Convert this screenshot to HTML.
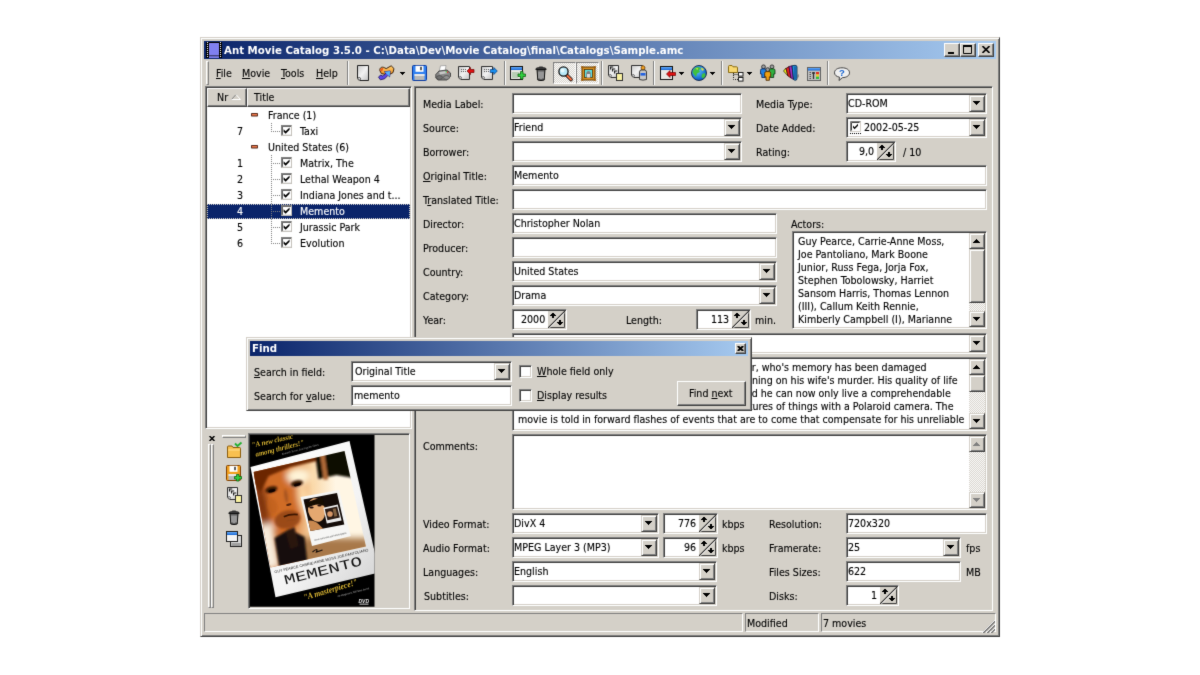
<!DOCTYPE html>
<html><head><meta charset="utf-8"><title>Ant Movie Catalog</title>
<style>
*{box-sizing:border-box;margin:0;padding:0}
html,body{width:1200px;height:675px;overflow:hidden;background:#fff}
body{position:relative;font-family:"DejaVu Sans Condensed","DejaVu Sans","Liberation Sans",sans-serif;font-stretch:condensed;font-size:10.6px;color:#000;line-height:13px}
#root{position:absolute;left:0;top:0;width:1200px;height:675px;background:#fff;filter:url(#soft)}
.a{position:absolute}
.t{position:absolute;white-space:pre;height:13px;line-height:13px;will-change:transform;-webkit-text-stroke:0.12px currentColor}
u{text-decoration:underline;text-underline-offset:1px}
#win{left:200px;top:37px;width:800px;height:599.6px;background:#d4d0c8;border:1px solid;border-color:#d4d0c8 #404040 #404040 #d4d0c8;box-shadow:inset 1px 1px 0 #fff,inset -1px -1px 0 #808080}
#tb{left:204px;top:41px;width:792px;height:18px;background:linear-gradient(90deg,#0a246a 0%,#a6caf0 100%)}
#tb .t{-webkit-text-stroke:0;color:#fff;font-weight:bold;font-size:11.35px;left:19.5px;top:2px;height:14px;line-height:14px}
.cb{position:absolute;top:2px;width:16px;height:14px;background:#d4d0c8;border:1px solid;border-color:#fff #404040 #404040 #fff;box-shadow:inset -1px -1px 0 #808080}
.sunk{position:absolute;background:#fff;border:1px solid;border-color:#808080 #fff #fff #808080;box-shadow:inset 1px 1px 0 #404040,inset -1px -1px 0 #d4d0c8}
.sunk .t{left:1px;top:3px}
.btn{position:absolute;background:#d4d0c8;border:1px solid;border-color:#d4d0c8 #404040 #404040 #d4d0c8;box-shadow:inset 1px 1px 0 #fff,inset -1px -1px 0 #808080}
.dd{position:absolute;right:1px;top:1px;width:16px;height:17px}
.dd:after,.sb i{content:"";position:absolute;left:3px;top:5px;width:7px;height:4px;background:linear-gradient(#000,#000) 0 0/7px 1px no-repeat,linear-gradient(#000,#000) 1px 1px/5px 1px no-repeat,linear-gradient(#000,#000) 2px 2px/3px 1px no-repeat,linear-gradient(#000,#000) 3px 3px/1px 1px no-repeat}
.arr{width:5px;height:3px;background:linear-gradient(#000,#000) 0 0/5px 1px no-repeat,linear-gradient(#000,#000) 1px 1px/3px 1px no-repeat,linear-gradient(#000,#000) 2px 2px/1px 1px no-repeat}
.sp{position:absolute;right:1px;top:1px;width:17px;height:17px}
.sep{position:absolute;top:61px;width:2px;height:24px;border-left:1px solid #808080;border-right:1px solid #fff}
.ic{position:absolute;overflow:visible}
.hd{background:#d4d0c8;border:1px solid;border-color:#fff #404040 #404040 #fff;box-shadow:inset -1px -1px 0 #808080}
.sb{background-color:#eae8e4;background-image:conic-gradient(#fff 25%,#d4d0c8 0 50%,#fff 0 75%,#d4d0c8 0);background-size:2px 2px}
.sb i.up{transform:scaleY(-1)}
.sb i.g{filter:invert(50%);box-shadow:none}
</style></head><body><svg width="0" height="0" style="position:absolute"><defs><filter id="soft" x="0" y="0" width="100%" height="100%" color-interpolation-filters="sRGB"><feConvolveMatrix order="3" kernelMatrix="0.01 0.08 0.01 0.08 0.64 0.08 0.01 0.08 0.01" edgeMode="duplicate" preserveAlpha="true"/></filter></defs></svg><div id="root">
<div id="win" class="a"></div>
<div id="tb" class="a"><div class="t">Ant Movie Catalog 3.5.0 - C:\Data\Dev\Movie Catalog\final\Catalogs\Sample.amc</div>
<div class="cb" style="left:740px"><svg class="a" style="left:3px;top:8px" width="6" height="2"><rect width="6" height="2" fill="#000"/></svg></div><div class="cb" style="left:756px"><svg class="a" style="left:2px;top:1px" width="9" height="9" viewBox="0 0 9 9"><path d="M0.5 1V8.5H8.5V1Z" fill="none" stroke="#000"/><path d="M0 1H9" stroke="#000" stroke-width="2"/></svg></div><div class="cb" style="left:774px"><svg class="a" style="left:3px;top:2px" width="8" height="7" viewBox="0 0 8 7"><path d="M0.5 0L7.5 7M7.5 0L0.5 7" stroke="#000" stroke-width="1.6"/></svg></div>
<svg class="a" style="left:2px;top:1px" width="16" height="16" viewBox="0 0 16 16"><rect width="16" height="16" fill="#000"/><rect x="3" y="1" width="10" height="12.5" fill="#8080f0"/><rect x="3" y="14.2" width="10" height="1.8" fill="#8080f0"/><path d="M1.5 0V16M14.5 0V16" stroke="#fff" stroke-width="1" stroke-dasharray="1 1"/></svg>
</div>
<div class="a" style="left:206px;top:61px;width:3px;height:24px;border:1px solid;border-color:#fff #808080 #808080 #fff"></div>
<div class="t" style="left:215.8px;top:66.5px;"><u>F</u>ile</div>
<div class="t" style="left:241.8px;top:66.5px;"><u>M</u>ovie</div>
<div class="t" style="left:281px;top:66.5px;"><u>T</u>ools</div>
<div class="t" style="left:315.5px;top:66.5px;"><u>H</u>elp</div>
<div class="sep" style="left:346.5px"></div>
<div class="sep" style="left:503.5px"></div>
<div class="sep" style="left:601px"></div>
<div class="sep" style="left:653px"></div>
<div class="sep" style="left:721px"></div>
<div class="sep" style="left:827px"></div>
<svg width="0" height="0" style="position:absolute"><defs>
<linearGradient id="gpage" x1="0" y1="0" x2="1" y2="1"><stop offset="0" stop-color="#c8c8c8"/><stop offset="0.5" stop-color="#f2f2f2"/><stop offset="1" stop-color="#c0c0c0"/></linearGradient>
<linearGradient id="gblue" x1="0" y1="0" x2="0" y2="1"><stop offset="0" stop-color="#6ab0ff"/><stop offset="1" stop-color="#1060d0"/></linearGradient>
<linearGradient id="gor" x1="0" y1="0" x2="0" y2="1"><stop offset="0" stop-color="#ffd070"/><stop offset="1" stop-color="#f09020"/></linearGradient>
<radialGradient id="gglobe" cx="0.4" cy="0.35" r="0.7"><stop offset="0" stop-color="#60c8ff"/><stop offset="1" stop-color="#0050c0"/></radialGradient>
<linearGradient id="ggray" x1="0" y1="0" x2="1" y2="0"><stop offset="0" stop-color="#b0b0b0"/><stop offset="0.5" stop-color="#707070"/><stop offset="1" stop-color="#404040"/></linearGradient>
<pattern id="chk" width="2" height="2" patternUnits="userSpaceOnUse"><rect width="2" height="2" fill="#fff"/><rect width="1" height="1" fill="#d4d0c8"/><rect x="1" y="1" width="1" height="1" fill="#d4d0c8"/></pattern>
</defs></svg>
<svg class="ic" style="left:356px;top:65px" width="16" height="16" viewBox="0 0 16 16"><path d="M1.5 0.5H12.5V15.5H4L1.5 13Z" fill="url(#gpage)" stroke="#202020"/><circle cx="3.2" cy="13.8" r="1.3" fill="#fff" stroke="#202020" stroke-width="0.8"/></svg>
<svg class="ic" style="left:378px;top:65px" width="16" height="16" viewBox="0 0 16 16"><path d="M1.8 5.5C1.5 2.8 3.8 1.4 6.2 2.6L8.2 3.6L13.2 0.8L16 3.6L15 7.6L11.2 9.6L9.6 7.6L6.6 9.2L3.4 8.6Z" fill="url(#gor)" stroke="#2a1200" stroke-width="0.9"/><path d="M2 5.5C2 3.5 3.8 2.6 5.5 3.2L4 6.5Z" fill="#f05818"/><path d="M0.5 12.2L2.6 10L5 11.2L8 8.2L6.4 6.8L12.2 6L11.6 11.8L10 10.3L6.6 13.8L2.4 14.8Z" fill="#5a48e8" stroke="#1a0c58" stroke-width="0.8"/><path d="M8 8.2L6.4 6.8L12.2 6L11.6 11.8L10 10.3Z" fill="#58b0f8"/></svg>
<div class="a arr" style="left:400px;top:72px"></div>
<svg class="ic" style="left:412px;top:65px" width="16" height="16" viewBox="0 0 16 16"><path d="M0.5 1.5Q0.5 0.5 1.5 0.5H13.5Q14.5 0.5 14.5 1.5V14.5Q14.5 15.5 13.5 15.5H1.5Q0.5 15.5 0.5 14.5Z" fill="#3080f0" stroke="#0838a0"/><rect x="3.5" y="0.8" width="8" height="6" fill="#fff"/><rect x="8" y="1.8" width="2" height="3.4" fill="#606060"/><rect x="2.5" y="9" width="10" height="6" fill="#b8b8b8"/><rect x="2.5" y="9" width="10" height="2" fill="#e8e8e8"/></svg>
<svg class="ic" style="left:435px;top:65px" width="16" height="16" viewBox="0 0 16 16"><path d="M4 7L5.5 0.8L11 0.5L10 7Z" fill="#fff" stroke="#909090" stroke-width="0.7"/><path d="M0.8 9.5L4 6L12 5L15.5 8V11.5L12 15H3L0.8 13Z" fill="#888" stroke="#303030" stroke-width="0.8"/><path d="M4 7L11 6L13 8L5 9.5Z" fill="#c8c8c8"/><ellipse cx="4.5" cy="12.5" rx="3" ry="2" fill="#707070" stroke="#404040" stroke-width="0.6"/><ellipse cx="11.5" cy="12.5" rx="3" ry="2" fill="#909090" stroke="#404040" stroke-width="0.6"/><rect x="12" y="6.6" width="1.2" height="1.2" fill="#e02020"/><rect x="10.6" y="6.2" width="1.2" height="1.2" fill="#20c020"/></svg>
<svg class="ic" style="left:458px;top:66px" width="16" height="16" viewBox="0 0 16 16"><path d="M0.5 0.5H11.5V13.5H3L0.5 11Z" fill="url(#gpage)" stroke="#303030"/><circle cx="2.2" cy="11.8" r="1.2" fill="#fff" stroke="#303030" stroke-width="0.8"/><path d="M3 3.5H8M3 5.5H8" stroke="#606060" stroke-width="1" stroke-dasharray="1 1"/><path d="M9 5L12.5 1.5V3.5H16V6.5H12.5V8.5Z" fill="#e01010" stroke="#700000" stroke-width="0.7"/></svg>
<svg class="ic" style="left:481px;top:66px" width="16" height="16" viewBox="0 0 16 16"><path d="M0.5 0.5H11.5V13.5H3L0.5 11Z" fill="url(#gpage)" stroke="#303030"/><circle cx="2.2" cy="11.8" r="1.2" fill="#fff" stroke="#303030" stroke-width="0.8"/><path d="M3 3.5H8M3 5.5H8" stroke="#606060" stroke-width="1" stroke-dasharray="1 1"/><path d="M16.3 5L12.8 1.5V3.5H9.3V6.5H12.8V8.5Z" fill="#1890f0" stroke="#003880" stroke-width="0.7"/></svg>
<svg class="ic" style="left:510px;top:66px" width="16" height="16" viewBox="0 0 16 16"><rect x="0.5" y="0.5" width="12" height="13" fill="#e8e8e4" stroke="#101010"/><rect x="1" y="1" width="11" height="3" fill="url(#gblue)"/><path d="M2 7H9M2 9H10M2 11H8" stroke="#60a060" stroke-width="1.2" opacity="0.7"/><path d="M10.5 5.5H13V8H15.5V10.5H13V13H10.5V10.5H8V8H10.5Z" fill="#30d040" stroke="#106010" stroke-width="0.8"/></svg>
<svg class="ic" style="left:535px;top:66px" width="12" height="15" viewBox="0 0 12 15"><path d="M2 3.5H10L9.2 14Q6 15.2 2.8 14Z" fill="#5c5c5c" stroke="#101010"/><path d="M4 5.5V12.5M6 5.5V13M8 5.5V12.5" stroke="#c8c8c8" stroke-width="1.1"/><path d="M0.8 3.5Q0.8 1.8 3 1.8H9Q11.2 1.8 11.2 3.5Z" fill="#484848" stroke="#101010" stroke-width="0.9"/><rect x="4" y="0.4" width="4" height="1.6" rx="0.6" fill="#303030"/></svg>
<div class="a" style="left:553px;top:62px;width:23px;height:22px;border:1px solid;border-color:#808080 #fff #fff #808080;background-image:conic-gradient(#fff 25%,#d4d0c8 0 50%,#fff 0 75%,#d4d0c8 0);background-size:2px 2px"></div>
<div class="a" style="left:576px;top:62px;width:23px;height:22px;border:1px solid;border-color:#808080 #fff #fff #808080;background-image:conic-gradient(#fff 25%,#d4d0c8 0 50%,#fff 0 75%,#d4d0c8 0);background-size:2px 2px"></div>
<svg class="ic" style="left:558px;top:66px" width="16" height="16" viewBox="0 0 16 16"><path d="M8 8.5L13 13.5" stroke="#101010" stroke-width="3.6" stroke-linecap="round"/><path d="M8.5 9L13 13.5" stroke="#ff7040" stroke-width="2" stroke-linecap="round"/><circle cx="5.5" cy="5.5" r="4.6" fill="#b8e8f8" stroke="#101010" stroke-width="1.3"/><circle cx="4.5" cy="4.5" r="2" fill="#e8faff"/></svg>
<svg class="ic" style="left:580.5px;top:66px" width="15" height="15" viewBox="0 0 15 15"><rect x="1" y="1" width="13" height="13" fill="#d89020" stroke="#603800" stroke-width="1"/><circle cx="1.3" cy="1.3" r="1.3" fill="#a06010"/><circle cx="13.7" cy="1.3" r="1.3" fill="#a06010"/><circle cx="1.3" cy="13.7" r="1.3" fill="#a06010"/><circle cx="13.7" cy="13.7" r="1.3" fill="#a06010"/><rect x="3.5" y="3.5" width="8" height="8" fill="#60e0e0" stroke="#503000" stroke-width="0.8"/><path d="M5.2 11.5V8Q5.2 5 7.5 5Q9.8 5 9.8 8V11.5Z" fill="#808080"/><rect x="6" y="8" width="3" height="3.5" fill="#e0e0e0"/></svg>
<svg class="ic" style="left:608px;top:65px" width="16" height="16" viewBox="0 0 16 16"><path d="M0.5 0.5H10.5V12.5H3L0.5 10Z" fill="url(#gpage)" stroke="#303030"/><circle cx="2.2" cy="10.8" r="1.2" fill="#fff" stroke="#303030" stroke-width="0.8"/><path d="M2.6 4.6V2H5.2M4.6 6.6V4H7.2M6.6 8.6V6H9.2" stroke="#202020" stroke-width="1.2" fill="none"/><rect x="8.5" y="8.5" width="6" height="7" fill="#f8f0a0" stroke="#303030"/></svg>
<svg class="ic" style="left:631px;top:65px" width="17" height="16" viewBox="0 0 17 16"><path d="M0.5 0.5H11.5V12.5H3L0.5 10Z" fill="url(#gpage)" stroke="#303030"/><circle cx="2.2" cy="10.8" r="1.2" fill="#fff" stroke="#303030" stroke-width="0.8"/><path d="M10 2L12 0.5L14 2L13.5 5H10.5Z" fill="#f0a020" stroke="#603000" stroke-width="0.7"/><path d="M8.5 7Q8.5 5 10.5 5H13.5Q15.5 5 15.5 7V14.5Q12 15.8 8.5 14.5Z" fill="#c8c8c8" stroke="#303030" stroke-width="0.9"/><rect x="9.5" y="8" width="5" height="2.6" fill="#2060e0"/></svg>
<svg class="ic" style="left:660px;top:66px" width="16" height="16" viewBox="0 0 16 16"><rect x="0.5" y="0.5" width="12" height="13" fill="#e8e8e4" stroke="#101010"/><rect x="1" y="1" width="11" height="3" fill="url(#gblue)"/><path d="M6.5 8L10 4.5V6.5H15.5V9.5H10V11.5Z" fill="#e01010" stroke="#700000" stroke-width="0.7"/></svg>
<div class="a arr" style="left:679px;top:72px"></div>
<svg class="ic" style="left:691px;top:65px" width="16" height="16" viewBox="0 0 16 16"><circle cx="8" cy="8" r="7.5" fill="url(#gglobe)" stroke="#102040" stroke-width="0.9"/><path d="M3 4Q5 1.5 8 2L10 3.5L8 5L9 7L6 8.5L5 12L3 9.5L1.5 7Z" fill="#40c040"/><path d="M10 2.5L13 4L12 6L10.5 5Z" fill="#e0e040"/><path d="M11 9L14 8L14.5 11L12 13.5L10.5 12Z" fill="#40c040"/><path d="M4.5 3.5L7 3L6.5 5Z" fill="#e0e040"/></svg>
<div class="a arr" style="left:710px;top:72px"></div>
<svg class="ic" style="left:728px;top:65px" width="16" height="17" viewBox="0 0 16 17"><path d="M0.5 1.5Q0.5 0.5 1.5 0.5H4L5 1.8H8.5Q9.5 1.8 9.5 2.8V7.5H0.5Z" fill="#f8d870" stroke="#806000" stroke-width="0.9"/><path d="M5.5 8V14.5H10M5.5 9.5H10" stroke="#202020" stroke-width="1" stroke-dasharray="1 1" fill="none"/><rect x="10.5" y="7.5" width="4.5" height="3.6" fill="#fff" stroke="#202020"/><rect x="10.5" y="12.5" width="4.5" height="3.6" fill="#fff" stroke="#202020"/></svg>
<div class="a arr" style="left:747px;top:72px"></div>
<svg class="ic" style="left:760px;top:65px" width="16" height="16" viewBox="0 0 16 16"><circle cx="3.5" cy="1.8" r="1.9" fill="#a0a0a0" stroke="#202020" stroke-width="0.8"/><path d="M0.5 5.5Q0.5 3.8 2 3.8H5Q6.5 3.8 6.5 5.5V9H5.2V12.5H1.8V9H0.5Z" fill="#2080e0" stroke="#082050" stroke-width="0.8"/><circle cx="12.0" cy="1.8" r="1.9" fill="#a0a0a0" stroke="#202020" stroke-width="0.8"/><path d="M9.0 5.5Q9.0 3.8 10.5 3.8H13.5Q15.0 3.8 15.0 5.5V9H13.7V12.5H10.3V9H9.0Z" fill="#30b040" stroke="#083010" stroke-width="0.8"/><circle cx="7.7" cy="4.6" r="1.9" fill="#a0a0a0" stroke="#202020" stroke-width="0.8"/><path d="M4.7 8.3Q4.7 6.6 6.2 6.6H9.2Q10.7 6.6 10.7 8.3V11.8H9.4V15.3H6.0V11.8H4.7Z" fill="#f0a010" stroke="#402000" stroke-width="0.8"/></svg>
<svg class="ic" style="left:783px;top:65px" width="16" height="16" viewBox="0 0 16 16"><path d="M14.5 13L16 12V9L14.5 10Z" fill="#909090"/><path d="M0.5 6L3 3L5 11Z" fill="#f0f020" stroke="#202000" stroke-width="0.7"/><path d="M3 3.5L6 1.5L8 13L5 11Z" fill="#e02020" stroke="#300000" stroke-width="0.7"/><path d="M6 1.5L9 0.8L10.5 14.5L8 13Z" fill="#a030c0" stroke="#200030" stroke-width="0.7"/><path d="M9 0.8L12 0.3Q14 0.3 14 2V13.5Q14 15.5 12 15.3L10.5 14.5Z" fill="#2090e0" stroke="#002040" stroke-width="0.8"/><path d="M12 1.5V14" stroke="#104080" stroke-width="1"/></svg>
<svg class="ic" style="left:806.5px;top:66.5px" width="14" height="14" viewBox="0 0 14 14"><rect x="0.5" y="0.5" width="13" height="13" fill="#c0c0c0" stroke="#606060"/><rect x="1" y="1" width="12" height="2.5" fill="url(#gblue)"/><path d="M2.5 5.5H4M2.5 7.5H4M2.5 9.5H4M2.5 11.5H4" stroke="#404040" stroke-width="0.9"/><path d="M5 6H8M6.5 5V12" stroke="#303030" stroke-width="1.3"/><rect x="9" y="5" width="3" height="2.4" fill="#e03020"/><rect x="9" y="7.4" width="3" height="2.3" fill="#f0d020"/><rect x="9" y="9.7" width="3" height="2.3" fill="#30c040"/></svg>
<svg class="ic" style="left:834px;top:67px" width="16" height="14" viewBox="0 0 16 14"><path d="M8 0.8C12.5 0.8 15.5 2.8 15.5 5.8C15.5 8.6 12.5 10.6 8.5 10.6L5 13.5L5.5 10.2C2.5 9.6 0.5 8 0.5 5.8C0.5 2.8 3.5 0.8 8 0.8Z" fill="#f0f0f0" stroke="#303030" stroke-width="0.9"/><text x="8" y="9" font-family="Liberation Sans,sans-serif" font-weight="bold" font-size="9.5" text-anchor="middle" fill="#1060d0">?</text></svg>
<div class="sunk" style="left:205px;top:86px;width:207px;height:343px"></div>
<div class="a hd" style="left:207px;top:88px;width:40px;height:19px"><div class="t" style="left:9.2px;top:1.5px">Nr</div><svg class="a" style="left:23.2px;top:4.5px" width="10" height="6" viewBox="0 0 10 6"><path d="M0.5 5.5L5 0.5" stroke="#808080" fill="none"/><path d="M5 0.5L9.5 5.5H0.5" stroke="#fff" fill="none"/></svg></div>
<div class="a hd" style="left:247px;top:88px;width:163px;height:19px"><div class="t" style="left:6px;top:1.5px">Title</div></div>
<svg class="a" style="left:251px;top:113.2px" width="7" height="3.4" viewBox="0 0 7 3.4"><rect x="0" y="0" width="7" height="3.4" rx="0.7" fill="#50281c"/><rect x="0.9" y="0.9" width="5.2" height="1.6" fill="#f07848"/></svg>
<div class="t" style="left:267.5px;top:108.5px;">France (1)</div>
<div class="t" style="left:237px;top:124.5px;color:#000">7</div>
<svg class="a" style="left:281px;top:125.3px" width="11.2" height="10.8" viewBox="0 0 12 12" preserveAspectRatio="none"><rect x="0.5" y="0.5" width="11" height="11" fill="#fff" stroke="#808080"/><path d="M1.5 11V1.5H11" stroke="#404040" fill="none"/><path d="M11.5 0.5V11.5H0.5" stroke="#d4d0c8" fill="none"/><path d="M2.8 4.8L5 7L9.2 2.8V5.4L5 9.6L2.8 7.4Z" fill="#000"/></svg>
<div class="t" style="left:300px;top:124.5px;color:#000">Taxi</div>
<svg class="a" style="left:251px;top:145.2px" width="7" height="3.4" viewBox="0 0 7 3.4"><rect x="0" y="0" width="7" height="3.4" rx="0.7" fill="#50281c"/><rect x="0.9" y="0.9" width="5.2" height="1.6" fill="#f07848"/></svg>
<div class="t" style="left:267.5px;top:140.5px;">United States (6)</div>
<div class="t" style="left:237px;top:156.5px;color:#000">1</div>
<svg class="a" style="left:281px;top:157.3px" width="11.2" height="10.8" viewBox="0 0 12 12" preserveAspectRatio="none"><rect x="0.5" y="0.5" width="11" height="11" fill="#fff" stroke="#808080"/><path d="M1.5 11V1.5H11" stroke="#404040" fill="none"/><path d="M11.5 0.5V11.5H0.5" stroke="#d4d0c8" fill="none"/><path d="M2.8 4.8L5 7L9.2 2.8V5.4L5 9.6L2.8 7.4Z" fill="#000"/></svg>
<div class="t" style="left:300px;top:156.5px;color:#000">Matrix, The</div>
<div class="t" style="left:237px;top:172.5px;color:#000">2</div>
<svg class="a" style="left:281px;top:173.3px" width="11.2" height="10.8" viewBox="0 0 12 12" preserveAspectRatio="none"><rect x="0.5" y="0.5" width="11" height="11" fill="#fff" stroke="#808080"/><path d="M1.5 11V1.5H11" stroke="#404040" fill="none"/><path d="M11.5 0.5V11.5H0.5" stroke="#d4d0c8" fill="none"/><path d="M2.8 4.8L5 7L9.2 2.8V5.4L5 9.6L2.8 7.4Z" fill="#000"/></svg>
<div class="t" style="left:300px;top:172.5px;color:#000">Lethal Weapon 4</div>
<div class="t" style="left:237px;top:188.5px;color:#000">3</div>
<svg class="a" style="left:281px;top:189.3px" width="11.2" height="10.8" viewBox="0 0 12 12" preserveAspectRatio="none"><rect x="0.5" y="0.5" width="11" height="11" fill="#fff" stroke="#808080"/><path d="M1.5 11V1.5H11" stroke="#404040" fill="none"/><path d="M11.5 0.5V11.5H0.5" stroke="#d4d0c8" fill="none"/><path d="M2.8 4.8L5 7L9.2 2.8V5.4L5 9.6L2.8 7.4Z" fill="#000"/></svg>
<div class="t" style="left:300px;top:188.5px;color:#000">Indiana Jones and t...</div>
<div class="a" style="left:207px;top:204px;width:203px;height:15px;background:#0a246a;outline:1px dotted #d4d0c8;outline-offset:-1px"></div>
<div class="t" style="left:237px;top:204.5px;color:#fff">4</div>
<svg class="a" style="left:281px;top:205.3px" width="11.2" height="10.8" viewBox="0 0 12 12" preserveAspectRatio="none"><rect x="0.5" y="0.5" width="11" height="11" fill="#fff" stroke="#808080"/><path d="M1.5 11V1.5H11" stroke="#404040" fill="none"/><path d="M11.5 0.5V11.5H0.5" stroke="#d4d0c8" fill="none"/><path d="M2.8 4.8L5 7L9.2 2.8V5.4L5 9.6L2.8 7.4Z" fill="#000"/></svg>
<div class="t" style="left:300px;top:204.5px;color:#fff">Memento</div>
<div class="t" style="left:237px;top:220.5px;color:#000">5</div>
<svg class="a" style="left:281px;top:221.3px" width="11.2" height="10.8" viewBox="0 0 12 12" preserveAspectRatio="none"><rect x="0.5" y="0.5" width="11" height="11" fill="#fff" stroke="#808080"/><path d="M1.5 11V1.5H11" stroke="#404040" fill="none"/><path d="M11.5 0.5V11.5H0.5" stroke="#d4d0c8" fill="none"/><path d="M2.8 4.8L5 7L9.2 2.8V5.4L5 9.6L2.8 7.4Z" fill="#000"/></svg>
<div class="t" style="left:300px;top:220.5px;color:#000">Jurassic Park</div>
<div class="t" style="left:237px;top:236.5px;color:#000">6</div>
<svg class="a" style="left:281px;top:237.3px" width="11.2" height="10.8" viewBox="0 0 12 12" preserveAspectRatio="none"><rect x="0.5" y="0.5" width="11" height="11" fill="#fff" stroke="#808080"/><path d="M1.5 11V1.5H11" stroke="#404040" fill="none"/><path d="M11.5 0.5V11.5H0.5" stroke="#d4d0c8" fill="none"/><path d="M2.8 4.8L5 7L9.2 2.8V5.4L5 9.6L2.8 7.4Z" fill="#000"/></svg>
<div class="t" style="left:300px;top:236.5px;color:#000">Evolution</div>
<div class="a" style="left:271px;top:123px;width:1px;height:9px;background-image:linear-gradient(#808080 50%,transparent 0);background-size:1px 2px"></div>
<div class="a" style="left:271px;top:131px;width:9px;height:1px;background-image:linear-gradient(90deg,#808080 50%,transparent 0);background-size:2px 1px"></div>
<div class="a" style="left:271px;top:155px;width:1px;height:89px;background-image:linear-gradient(#808080 50%,transparent 0);background-size:1px 2px"></div>
<div class="a" style="left:271px;top:163px;width:9px;height:1px;background-image:linear-gradient(90deg,#808080 50%,transparent 0);background-size:2px 1px"></div>
<div class="a" style="left:271px;top:179px;width:9px;height:1px;background-image:linear-gradient(90deg,#808080 50%,transparent 0);background-size:2px 1px"></div>
<div class="a" style="left:271px;top:195px;width:9px;height:1px;background-image:linear-gradient(90deg,#808080 50%,transparent 0);background-size:2px 1px"></div>
<div class="a" style="left:271px;top:211px;width:9px;height:1px;background-image:linear-gradient(90deg,#808080 50%,transparent 0);background-size:2px 1px"></div>
<div class="a" style="left:271px;top:227px;width:9px;height:1px;background-image:linear-gradient(90deg,#808080 50%,transparent 0);background-size:2px 1px"></div>
<div class="a" style="left:271px;top:243px;width:9px;height:1px;background-image:linear-gradient(90deg,#808080 50%,transparent 0);background-size:2px 1px"></div>
<svg class="a" style="left:209px;top:436px" width="6" height="5" viewBox="0 0 6 5"><path d="M0.5 0L5.5 5M5.5 0L0.5 5" stroke="#000" stroke-width="1.5"/></svg>
<div class="a" style="left:208px;top:444px;width:3px;height:164px;border:1px solid;border-color:#fff #808080 #808080 #fff"></div>
<div class="a" style="left:211px;top:444px;width:3px;height:164px;border:1px solid;border-color:#fff #808080 #808080 #fff"></div>
<div class="a" style="left:222px;top:435px;width:24px;height:3px;border:1px solid;border-color:#fff #808080 #808080 #fff"></div>
<svg class="ic" style="left:227px;top:442px" width="16" height="16" viewBox="0 0 16 16"><path d="M0.5 5Q0.5 4 1.5 4H5L6 5.5H12.5Q13.5 5.5 13.5 6.5V15.5H0.5Z" fill="#f8c050" stroke="#805000" stroke-width="0.9"/><path d="M1 8H13" stroke="#ffe090" stroke-width="1"/><path d="M8 1.5L10.5 4L14.5 0.5" stroke="#20b030" stroke-width="1.8" fill="none"/></svg>
<svg class="ic" style="left:226px;top:465px" width="16" height="16" viewBox="0 0 16 16"><path d="M0.5 1.5Q0.5 0.5 1.5 0.5H13.5Q14.5 0.5 14.5 1.5V14.5Q14.5 15.5 13.5 15.5H1.5Q0.5 15.5 0.5 14.5Z" fill="#f0a020" stroke="#804000"/><rect x="3.5" y="0.8" width="8" height="6" fill="#fff"/><rect x="8" y="1.8" width="2" height="3.4" fill="#606060"/><rect x="2.5" y="9" width="10" height="6" fill="#b8b8b8"/><rect x="2.5" y="9" width="10" height="2" fill="#e8e8e8"/><path d="M10.5 9.5H13V11.5H15.5V14H13V16H10.5V14H8.5V11.5H10.5Z" fill="#30d040" stroke="#106010" stroke-width="0.8"/></svg>
<svg class="ic" style="left:227px;top:487px" width="16" height="16" viewBox="0 0 16 16"><path d="M0.5 0.5H10.5V12.5H3L0.5 10Z" fill="url(#gpage)" stroke="#303030"/><circle cx="2.2" cy="10.8" r="1.2" fill="#fff" stroke="#303030" stroke-width="0.8"/><path d="M2.6 4.6V2H5.2M4.6 6.6V4H7.2M6.6 8.6V6H9.2" stroke="#202020" stroke-width="1.2" fill="none"/><rect x="8.5" y="8.5" width="6" height="7" fill="#f8f0a0" stroke="#303030"/></svg>
<svg class="ic" style="left:228px;top:510px" width="12" height="15" viewBox="0 0 12 15"><path d="M2 3.5H10L9.2 14Q6 15.2 2.8 14Z" fill="#5c5c5c" stroke="#101010"/><path d="M4 5.5V12.5M6 5.5V13M8 5.5V12.5" stroke="#c8c8c8" stroke-width="1.1"/><path d="M0.8 3.5Q0.8 1.8 3 1.8H9Q11.2 1.8 11.2 3.5Z" fill="#484848" stroke="#101010" stroke-width="0.9"/><rect x="4" y="0.4" width="4" height="1.6" rx="0.6" fill="#303030"/></svg>
<svg class="ic" style="left:226px;top:531px" width="16" height="16" viewBox="0 0 16 16"><rect x="4.5" y="4.5" width="11" height="11" fill="#d8d8d8" stroke="#202020"/><rect x="5.5" y="12" width="9" height="3" fill="#a0a0a0"/><rect x="0.5" y="0.5" width="11" height="10" fill="#f4f4f4" stroke="#202020"/><rect x="1" y="1" width="10" height="3" fill="url(#gblue)"/></svg>
<div class="a" style="left:248px;top:433px;width:162px;height:176px;border:1px solid;border-color:#808080 #fff #fff #808080;box-shadow:inset 1px 1px 0 #404040"></div>
<svg class="a" style="left:249.5px;top:435px;will-change:transform" width="124.5" height="171.8" viewBox="249.5 435 124.5 171.8">
<defs>
<filter id="b1" x="-30%" y="-30%" width="160%" height="160%"><feGaussianBlur stdDeviation="1.3"/></filter>
<filter id="b2" x="-30%" y="-30%" width="160%" height="160%"><feGaussianBlur stdDeviation="3.2"/></filter>
<filter id="b0" x="-30%" y="-30%" width="160%" height="160%"><feGaussianBlur stdDeviation="0.55"/></filter>
<linearGradient id="pg4" x1="0" y1="0" x2="1" y2="1"><stop offset="0" stop-color="#ffffff"/><stop offset="0.6" stop-color="#f4f4f4"/><stop offset="1" stop-color="#d0d0d0"/></linearGradient>
<linearGradient id="pgb" gradientUnits="userSpaceOnUse" x1="253" y1="0" x2="335" y2="0"><stop offset="0" stop-color="#9c400c"/><stop offset="0.4" stop-color="#d4702c"/><stop offset="0.72" stop-color="#fad8a8"/><stop offset="1" stop-color="#fff6e4"/></linearGradient>
<clipPath id="pc"><rect x="249.5" y="435" width="124.5" height="171.8"/></clipPath>
<clipPath id="pph"><polygon points="253,472 344,451 365.5,546.5 270,567.5"/></clipPath>
<clipPath id="pp2"><polygon points="303,499.5 336.5,493 343.8,524.5 310,531"/></clipPath>
</defs>
<g clip-path="url(#pc)">
<rect x="249" y="434" width="126" height="174" fill="#000"/>
<g fill="#d4b030" font-family="Liberation Serif,serif" font-style="italic" font-weight="bold" font-size="7.4">
<text transform="translate(251.8 447.6) rotate(-12.5)" textLength="42" lengthAdjust="spacingAndGlyphs">"A new classic</text>
<text transform="translate(255.6 456.8) rotate(-14)" textLength="50" lengthAdjust="spacingAndGlyphs">among thrillers!"</text>
<text transform="translate(281.5 455) rotate(-14.5)" font-size="2.8" fill="#b0b0b0" font-weight="normal" textLength="38">Kenneth Turan, Los Angeles Times</text>
</g>
<polygon points="250,467 349,441 376,560 376,573.2 275,597.3" fill="url(#pg4)"/>
<g clip-path="url(#pph)">
<rect x="250" y="448" width="120" height="122" fill="url(#pgb)"/>
<g filter="url(#b2)">
<ellipse cx="281" cy="500" rx="21" ry="31" fill="#d06c28" transform="rotate(-12 282 499)"/>
<ellipse cx="298" cy="476" rx="12" ry="8" fill="#fff4d8"/>
<ellipse cx="303" cy="500" rx="5" ry="17" fill="#ffdca8" transform="rotate(-12 303 500)"/>
<rect x="255" y="524" width="21" height="46" fill="#f8ecdc" transform="rotate(-10 265 546)"/>
<rect x="298" y="538" width="72" height="30" fill="#a87848"/>
<ellipse cx="261.5" cy="502" rx="5.5" ry="24" fill="#7c300a" transform="rotate(-12 261.5 502)"/>
</g>
<g filter="url(#b1)">
<polygon points="249,466 315,450 316,461 290,467 268,476 260,492 251,482" fill="#6c2806"/>
<polygon points="314,450 347,444 353,478 336,475 318,479" fill="#100806"/>
<rect x="321.5" y="455" width="4.5" height="25" fill="#b06a38" transform="rotate(-8 323 468)"/>
<ellipse cx="287" cy="519.5" rx="13" ry="9" fill="#843a10" opacity="0.7" transform="rotate(-12 287 519.5)"/>
<polygon points="274,538 289,529 304,537 307,563 279,569" fill="#180e08"/>
<polygon points="285,531 294,527 298,546 290,549" fill="#2c160a"/>
<ellipse cx="270.8" cy="489.6" rx="6.2" ry="3.1" fill="#341204" transform="rotate(-16 270.8 489.6)"/>
<ellipse cx="296.4" cy="483.4" rx="6.2" ry="3" fill="#341204" transform="rotate(-12 296.4 483.4)"/>
<ellipse cx="285.6" cy="496" rx="1.8" ry="7" fill="#a85420" transform="rotate(-8 285.6 496)"/>
<ellipse cx="272" cy="506" rx="5" ry="8" fill="#c0601f" opacity="0.7" transform="rotate(-12 272 506)"/>
</g>
<g filter="url(#b0)">
<ellipse cx="271.4" cy="490.8" rx="3.6" ry="1.5" fill="#0c0402" transform="rotate(-14 271.4 490.8)"/>
<ellipse cx="296.8" cy="484.6" rx="3.6" ry="1.5" fill="#0c0402" transform="rotate(-14 296.8 484.6)"/>
<ellipse cx="288.3" cy="504.6" rx="2.8" ry="1.2" fill="#5a260c" transform="rotate(-14 288.3 504.6)"/>
<path d="M283.3 516.8Q289.5 513.8 297.2 514.6" stroke="#3c1606" stroke-width="1.8" fill="none"/>
<path d="M286 521.2Q291 519.8 295 520" stroke="#944818" stroke-width="1.3" fill="none"/>
<path d="M312 552Q318 547 316 552L322 550" stroke="#181008" stroke-width="1.2" fill="none"/>
</g>
</g>
<polygon points="300,497 338.5,490 350.3,536 311.5,546" fill="#f6f6f4"/>
<polygon points="303,499.5 336.5,493 343.8,524.5 310,531" fill="#140c08"/>
<g clip-path="url(#pp2)">
<g filter="url(#b0)">
<ellipse cx="316" cy="510" rx="8.5" ry="12" fill="#e4a870" transform="rotate(-14 316 510)"/>
<path d="M304 503L322 497L324 506Q316 502 307 508Z" fill="#140a06"/>
<ellipse cx="311" cy="507.5" rx="2.2" ry="1" fill="#201008"/><ellipse cx="319" cy="505.5" rx="2.2" ry="1" fill="#201008"/>
<path d="M303 522Q312 518 318 524L324 530L308 533Z" fill="#c88850"/>
</g>
</g>
<polygon points="322.8,507.7 337.3,504.5 341.1,520.4 326.3,523.6" fill="#ececec"/>
<polygon points="324.3,509.3 336.6,506.6 339.3,517.4 327,520.2" fill="#2c1c14"/>
<circle cx="329.5" cy="514" r="2.8" fill="#d89868"/><rect x="333" y="508.5" width="3" height="8" fill="#806040" transform="rotate(-12 334.5 512.5)"/>
<g font-family="Liberation Sans,sans-serif" fill="#202020">
<text transform="translate(274.3 573.2) rotate(-13.3)" font-size="3.7" textLength="96.5" lengthAdjust="spacingAndGlyphs">GUY PEARCE   CARRIE-ANNE MOSS   JOE PANTOLIANO</text>
<text transform="translate(284.8 584.6) rotate(-14.2) scale(1 1.05)" font-size="13" textLength="80" lengthAdjust="spacingAndGlyphs" font-family="Liberation Mono,monospace" fill="#101010">MEMENTO</text>
<text transform="translate(314 541) rotate(-13)" font-size="2.4" fill="#505050" textLength="33">some memories are best forgotten</text>
</g>
<g fill="#d4b030" font-family="Liberation Serif,serif" font-style="italic" font-weight="bold">
<text transform="translate(304 600.3) rotate(-16.5)" font-size="8.6" textLength="56" lengthAdjust="spacingAndGlyphs">"A masterpiece!"</text>
<text transform="translate(337 597) rotate(-14)" font-size="2.6" fill="#b0b0b0" font-weight="normal" textLength="33">Joe Morgenstern, Wall Street Journal</text>
</g>
<text x="358" y="602.8" font-size="4.6" font-weight="bold" font-style="italic" fill="#e8e8e8" font-family="Liberation Sans,sans-serif" textLength="10.5" lengthAdjust="spacingAndGlyphs">DVD</text>
<rect x="359" y="603.6" width="9" height="1.1" fill="#c0c0c0"/>
</g>
</svg>

<div class="a" style="left:414px;top:86px;width:579px;height:525px;border:1px solid;border-color:#808080 #fff #fff #808080;box-shadow:inset 1px 1px 0 #404040"></div>
<div class="t" style="left:423.2px;top:97.5px;">Media Label:</div>
<div class="sunk" style="left:512px;top:93px;width:230px;height:21px"><div class="t"></div></div>
<div class="t" style="left:423.2px;top:121.5px;">Source:</div>
<div class="sunk" style="left:512px;top:117px;width:230px;height:21px"><div class="t">Friend</div><div class="btn dd"></div></div>
<div class="t" style="left:423.2px;top:145.5px;">Borrower:</div>
<div class="sunk" style="left:512px;top:141px;width:230px;height:21px"><div class="t"></div><div class="btn dd"></div></div>
<div class="t" style="left:423.2px;top:169.5px;"><u>O</u>riginal Title:</div>
<div class="sunk" style="left:512px;top:165px;width:475px;height:21px"><div class="t">Memento</div></div>
<div class="t" style="left:423.2px;top:193.5px;">T<u>r</u>anslated Title:</div>
<div class="sunk" style="left:512px;top:189px;width:475px;height:21px"><div class="t"></div></div>
<div class="t" style="left:423.2px;top:217.5px;">Director:</div>
<div class="sunk" style="left:512px;top:213px;width:265px;height:21px"><div class="t">Christopher Nolan</div></div>
<div class="t" style="left:423.2px;top:241.5px;">Producer:</div>
<div class="sunk" style="left:512px;top:237px;width:265px;height:21px"><div class="t"></div></div>
<div class="t" style="left:423.2px;top:265.5px;">Country:</div>
<div class="sunk" style="left:512px;top:261px;width:265px;height:21px"><div class="t">United States</div><div class="btn dd"></div></div>
<div class="t" style="left:423.2px;top:289.5px;">Category:</div>
<div class="sunk" style="left:512px;top:285px;width:265px;height:21px"><div class="t">Drama</div><div class="btn dd"></div></div>
<div class="t" style="left:423.2px;top:313.5px;">Year:</div>
<div class="sunk" style="left:512px;top:309px;width:55px;height:21px"><div class="t" style="left:auto;right:20.5px">2000</div><svg class="sp" viewBox="0 0 17 17"><rect width="17" height="17" fill="#d4d0c8"/><path d="M16.5 0V16.5H0" stroke="#404040" fill="none"/><path d="M0.3 16.7L16.7 0.3" stroke="#202020" stroke-width="1.1"/><path d="M1.3 17L17 1.3" stroke="#fff" stroke-width="0.9"/><path shape-rendering="crispEdges" d="M4 2h2v1h1v1h1v1h-2v2h-2v-2h-2v-1h1v-1h1z" fill="#000"/><path shape-rendering="crispEdges" d="M11 9h2v2h2v1h-1v1h-1v1h-2v-1h-1v-1h-1v-1h2z" fill="#000"/></svg></div>
<div class="t" style="left:626px;top:313.5px;">Length:</div>
<div class="sunk" style="left:696px;top:309px;width:55px;height:21px"><div class="t" style="left:auto;right:20.5px">113</div><svg class="sp" viewBox="0 0 17 17"><rect width="17" height="17" fill="#d4d0c8"/><path d="M16.5 0V16.5H0" stroke="#404040" fill="none"/><path d="M0.3 16.7L16.7 0.3" stroke="#202020" stroke-width="1.1"/><path d="M1.3 17L17 1.3" stroke="#fff" stroke-width="0.9"/><path shape-rendering="crispEdges" d="M4 2h2v1h1v1h1v1h-2v2h-2v-2h-2v-1h1v-1h1z" fill="#000"/><path shape-rendering="crispEdges" d="M11 9h2v2h2v1h-1v1h-1v1h-2v-1h-1v-1h-1v-1h2z" fill="#000"/></svg></div>
<div class="t" style="left:754.5px;top:313.5px;">min.</div>
<div class="t" style="left:755.7px;top:97.5px;">Media Type:</div>
<div class="sunk" style="left:846px;top:93px;width:141px;height:21px"><div class="t">CD-ROM</div><div class="btn dd"></div></div>
<div class="t" style="left:755.7px;top:121.5px;">Date Added:</div>
<div class="sunk" style="left:846px;top:117px;width:141px;height:21px"><div class="t" style="left:17px">2002-05-25</div><svg class="a" style="left:3px;top:3px" width="13" height="14" viewBox="0 0 13 14"><rect x="0" y="0" width="11" height="11" fill="#fff"/><path d="M10.5 0.5V10.5H0.5" stroke="#d4d0c8" fill="none"/><path d="M0.5 10.5V0.5H10.5" stroke="#808080" fill="none"/><path d="M1.5 9.5V1.5H9.5" stroke="#404040" fill="none"/><path d="M3 4.6L4.6 6.2L8 2.8V4.8L4.6 8.2L3 6.6Z" fill="#000"/><path d="M0 12.5H12" stroke="#000" stroke-dasharray="1 1"/></svg><div class="btn dd"></div></div>
<div class="t" style="left:755.7px;top:145.5px;">Rating:</div>
<div class="sunk" style="left:846px;top:141px;width:50px;height:21px"><div class="t" style="left:auto;right:20.5px">9,0</div><svg class="sp" viewBox="0 0 17 17"><rect width="17" height="17" fill="#d4d0c8"/><path d="M16.5 0V16.5H0" stroke="#404040" fill="none"/><path d="M0.3 16.7L16.7 0.3" stroke="#202020" stroke-width="1.1"/><path d="M1.3 17L17 1.3" stroke="#fff" stroke-width="0.9"/><path shape-rendering="crispEdges" d="M4 2h2v1h1v1h1v1h-2v2h-2v-2h-2v-1h1v-1h1z" fill="#000"/><path shape-rendering="crispEdges" d="M11 9h2v2h2v1h-1v1h-1v1h-2v-1h-1v-1h-1v-1h2z" fill="#000"/></svg></div>
<div class="t" style="left:903px;top:145.5px;">/ 10</div>
<div class="t" style="left:791.2px;top:217.5px;">Actors:</div>
<div class="sunk" style="left:792px;top:231px;width:195px;height:98px"><div class="t" style="left:5px;top:3px">Guy Pearce, Carrie-Anne Moss,</div><div class="t" style="left:5px;top:16px">Joe Pantoliano, Mark Boone</div><div class="t" style="left:5px;top:29px">Junior, Russ Fega, Jorja Fox,</div><div class="t" style="left:5px;top:42px">Stephen Tobolowsky, Harriet</div><div class="t" style="left:5px;top:55px">Sansom Harris, Thomas Lennon</div><div class="t" style="left:5px;top:68px">(III), Callum Keith Rennie,</div><div class="t" style="left:5px;top:81px">Kimberly Campbell (I), Marianne</div><div class="a sb" style="right:1px;top:1px;width:16px;height:94px"><div class="btn" style="left:0;top:0;width:16px;height:16px"><i class="up"></i></div><div class="btn" style="left:0;bottom:0;width:16px;height:16px"><i class="dn"></i></div><div class="btn" style="left:0;top:16px;width:16px;height:54px"></div></div></div>
<div class="sunk" style="left:512px;top:333px;width:475px;height:21px"><div class="t"></div><div class="btn dd"></div></div>
<div class="sunk" style="left:512px;top:357px;width:475px;height:74px"><div class="a" style="left:239px;top:0;width:216px;height:56px;overflow:hidden"><div class="t" style="left:auto;right:41px;top:2.5px">about Leonard (Guy Pearce), an ex-insurance investigator, who's memory has been damaged</div><div class="t" style="left:auto;right:10px;top:15.5px">following a head injury he sustained after intervening on his wife's murder. His quality of life</div><div class="t" style="left:auto;right:17.399999999999977px;top:28.5px">has been severely hampered after this event, and he can now only live a comprehendable</div><div class="t" style="left:auto;right:14px;top:41.5px">life by tattooing notes on himself and taking pictures of things with a Polaroid camera. The</div></div><div class="t" style="left:5px;top:54.5px">movie is told in forward flashes of events that are to come that compensate for his unreliable</div><div class="a sb" style="right:1px;top:1px;width:16px;height:70px"><div class="btn" style="left:0;top:0;width:16px;height:16px"><i class="up"></i></div><div class="btn" style="left:0;bottom:0;width:16px;height:16px"><i class="dn"></i></div><div class="btn" style="left:0;top:16px;width:16px;height:17px"></div></div></div>
<div class="t" style="left:423.2px;top:439.5px;">Comments:</div>
<div class="sunk" style="left:512px;top:434px;width:475px;height:76px"><div class="a sb" style="right:1px;top:1px;width:16px;height:72px"><div class="btn" style="left:0;top:0;width:16px;height:16px"><i class="up g"></i></div><div class="btn" style="left:0;bottom:0;width:16px;height:16px"><i class="dn g"></i></div></div></div>
<div class="t" style="left:423.2px;top:517.5px;">Video Format:</div>
<div class="sunk" style="left:512px;top:513px;width:147px;height:21px"><div class="t">DivX 4</div><div class="btn dd"></div></div>
<div class="sunk" style="left:663px;top:513px;width:55px;height:21px"><div class="t" style="left:auto;right:20.5px">776</div><svg class="sp" viewBox="0 0 17 17"><rect width="17" height="17" fill="#d4d0c8"/><path d="M16.5 0V16.5H0" stroke="#404040" fill="none"/><path d="M0.3 16.7L16.7 0.3" stroke="#202020" stroke-width="1.1"/><path d="M1.3 17L17 1.3" stroke="#fff" stroke-width="0.9"/><path shape-rendering="crispEdges" d="M4 2h2v1h1v1h1v1h-2v2h-2v-2h-2v-1h1v-1h1z" fill="#000"/><path shape-rendering="crispEdges" d="M11 9h2v2h2v1h-1v1h-1v1h-2v-1h-1v-1h-1v-1h2z" fill="#000"/></svg></div>
<div class="t" style="left:721.5px;top:517.5px;">kbps</div>
<div class="t" style="left:423.2px;top:541.5px;">Audio Format:</div>
<div class="sunk" style="left:512px;top:537px;width:147px;height:21px"><div class="t">MPEG Layer 3 (MP3)</div><div class="btn dd"></div></div>
<div class="sunk" style="left:663px;top:537px;width:55px;height:21px"><div class="t" style="left:auto;right:20.5px">96</div><svg class="sp" viewBox="0 0 17 17"><rect width="17" height="17" fill="#d4d0c8"/><path d="M16.5 0V16.5H0" stroke="#404040" fill="none"/><path d="M0.3 16.7L16.7 0.3" stroke="#202020" stroke-width="1.1"/><path d="M1.3 17L17 1.3" stroke="#fff" stroke-width="0.9"/><path shape-rendering="crispEdges" d="M4 2h2v1h1v1h1v1h-2v2h-2v-2h-2v-1h1v-1h1z" fill="#000"/><path shape-rendering="crispEdges" d="M11 9h2v2h2v1h-1v1h-1v1h-2v-1h-1v-1h-1v-1h2z" fill="#000"/></svg></div>
<div class="t" style="left:721.5px;top:541.5px;">kbps</div>
<div class="t" style="left:423.2px;top:565.5px;">Languages:</div>
<div class="sunk" style="left:512px;top:561px;width:205px;height:21px"><div class="t">English</div><div class="btn dd"></div></div>
<div class="t" style="left:424.2px;top:589.5px;">Subtitles:</div>
<div class="sunk" style="left:512px;top:585px;width:205px;height:21px"><div class="t"></div><div class="btn dd"></div></div>
<div class="t" style="left:768.5px;top:517.5px;">Resolution:</div>
<div class="sunk" style="left:846px;top:513px;width:141px;height:21px"><div class="t">720x320</div></div>
<div class="t" style="left:768.5px;top:541.5px;">Framerate:</div>
<div class="sunk" style="left:846px;top:537px;width:115px;height:21px"><div class="t">25</div><div class="btn dd"></div></div>
<div class="t" style="left:965.5px;top:541.5px;">fps</div>
<div class="t" style="left:768.5px;top:565.5px;">Files Sizes:</div>
<div class="sunk" style="left:846px;top:561px;width:115px;height:21px"><div class="t">622</div></div>
<div class="t" style="left:965.5px;top:565.5px;">MB</div>
<div class="t" style="left:768.5px;top:589.5px;">Disks:</div>
<div class="sunk" style="left:846px;top:585px;width:53px;height:21px"><div class="t" style="left:auto;right:20.5px">1</div><svg class="sp" viewBox="0 0 17 17"><rect width="17" height="17" fill="#d4d0c8"/><path d="M16.5 0V16.5H0" stroke="#404040" fill="none"/><path d="M0.3 16.7L16.7 0.3" stroke="#202020" stroke-width="1.1"/><path d="M1.3 17L17 1.3" stroke="#fff" stroke-width="0.9"/><path shape-rendering="crispEdges" d="M4 2h2v1h1v1h1v1h-2v2h-2v-2h-2v-1h1v-1h1z" fill="#000"/><path shape-rendering="crispEdges" d="M11 9h2v2h2v1h-1v1h-1v1h-2v-1h-1v-1h-1v-1h2z" fill="#000"/></svg></div>
<div class="a" style="left:204px;top:613px;width:539px;height:19px;border:1px solid;border-color:#808080 #fff #fff #808080"><div class="t" style="left:0.5px;top:2.5px"></div></div>
<div class="a" style="left:745px;top:613px;width:74px;height:19px;border:1px solid;border-color:#808080 #fff #fff #808080"><div class="t" style="left:0.5px;top:2.5px">Modified</div></div>
<div class="a" style="left:821px;top:613px;width:175px;height:19px;border:1px solid;border-color:#808080 #fff #fff #808080"><div class="t" style="left:0.5px;top:2.5px">7 movies</div></div>
<svg class="a" style="left:982px;top:620px" width="13" height="13" viewBox="0 0 13 13"><g stroke="#707070" stroke-width="1.9"><path d="M13 1L1 13M13 5L5 13M13 9L9 13"/></g><g stroke="#fff" stroke-width="0.9"><path d="M13 0L0 13M13 4L4 13M13 8L8 13"/></g></svg>
<div class="a" style="left:246px;top:337px;width:506px;height:74px;background:#d4d0c8;border:1px solid;border-color:#d4d0c8 #404040 #404040 #d4d0c8;box-shadow:inset 1px 1px 0 #fff,inset -1px -1px 0 #808080"></div>
<div class="a" style="left:250px;top:341px;width:498px;height:15px;background:linear-gradient(90deg,#0a246a 0%,#a6caf0 100%)"><div class="t" style="left:1.5px;top:1px;color:#fff;font-weight:bold;font-size:11.35px;-webkit-text-stroke:0">Find</div><div class="cb" style="left:485px;top:2px;width:11px;height:11px"><svg class="a" style="left:1px;top:2px" width="7" height="5" viewBox="0 0 7 5"><path d="M0.8 0L6.2 5M6.2 0L0.8 5" stroke="#000" stroke-width="1.9"/></svg></div></div>
<div class="t" style="left:253.5px;top:365.5px;"><u>S</u>earch in field:</div>
<div class="t" style="left:253.5px;top:389.5px;">Search for <u>v</u>alue:</div>
<div class="sunk" style="left:351px;top:361px;width:161px;height:21px"><div class="t" style="left:2.5px">Original Title</div><div class="btn dd"></div></div>
<div class="sunk" style="left:351px;top:385px;width:161px;height:21px"><div class="t" style="left:2px">memento</div></div>
<div class="sunk" style="left:519px;top:365px;width:13px;height:13px"></div>
<div class="sunk" style="left:519px;top:389px;width:13px;height:13px"></div>
<div class="t" style="left:537px;top:364.7px;"><u>W</u>hole field only</div>
<div class="t" style="left:537px;top:388.7px;"><u>D</u>isplay results</div>
<div class="a" style="left:677px;top:381px;width:69px;height:25px;background:#d4d0c8;border:1px solid;border-color:#fff #404040 #404040 #fff;box-shadow:inset -1px -1px 0 #808080"><div class="t" style="left:10.5px;top:5px">Find <u>n</u>ext</div></div>
</div></body></html>
